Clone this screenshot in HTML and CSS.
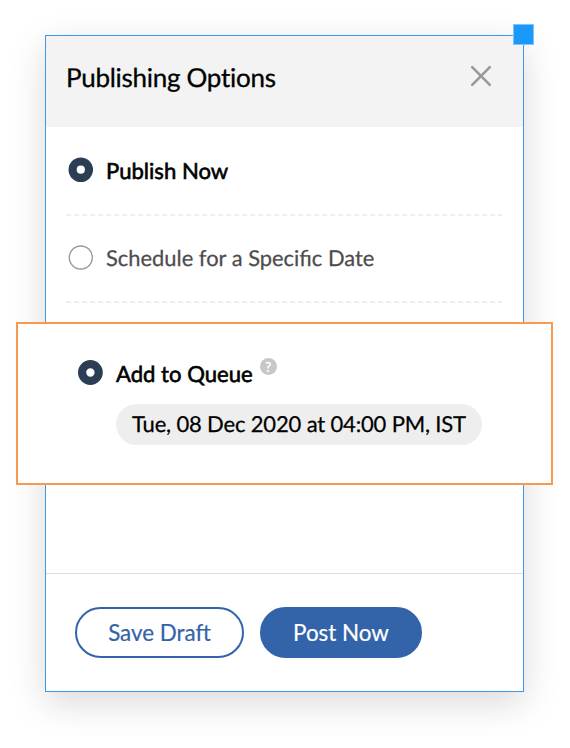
FILE: index.html
```html
<!DOCTYPE html>
<html lang="en">
<head>
<meta charset="utf-8">
<title>Publishing Options</title>
<link rel="stylesheet" href="styles.css">
</head>
<body>
<main class="dialog">
  <span class="handle"></span>
  <header class="header">
    <h1 class="title">Publishing Options</h1>
    <svg class="close" width="22" height="22" viewBox="0 0 22 22"><path d="M2.2 2.2L19.8 19.8M19.8 2.2L2.2 19.8"/></svg>
  </header>
  <section class="options">
    <div class="option">
      <svg class="radio" viewBox="0 0 25 25"><circle class="radio-on" cx="12.8" cy="12.7" r="8.2"/></svg>
      <span class="label label-strong">Publish Now</span>
    </div>
    <div class="option">
      <svg class="radio" viewBox="0 0 25 25"><circle class="radio-off" cx="12.8" cy="12.5" r="11.5"/></svg>
      <span class="label label-muted">Schedule for a Specific Date</span>
    </div>
  </section>
  <section class="queue">
    <div class="queue-head">
      <svg class="radio" viewBox="0 0 25 25"><circle class="radio-on" cx="12.4" cy="12.5" r="8.3"/></svg>
      <span class="label label-strong">Add to Queue</span>
      <span class="help">?</span>
    </div>
    <span class="slot">Tue, 08 Dec 2020 at 04:00 PM, IST</span>
  </section>
  <footer class="footer">
    <button class="button draft">Save Draft</button>
    <button class="button post">Post Now</button>
  </footer>
</main>
</body>
</html>
```
FILE: styles.css
```css
* { box-sizing: border-box; }
html { height: 100%; }
body {
  margin: 0;
  min-height: 748px;
  padding: 35px 0 0 45px;
  background: #fff;
  font-family: Lato, "Liberation Sans", sans-serif;
  font-size: 22px;
  text-rendering: geometricPrecision;
  color: #000;
}
.dialog {
  position: relative;
  display: flex;
  flex-direction: column;
  width: 479px;
  height: 657px;
  border: 1px solid #3d98e8;
  background: #fff;
  box-shadow: 0 11px 34px rgba(0, 0, 0, 0.15);
}
.handle {
  position: absolute;
  top: -12px;
  right: -11px;
  width: 21px;
  height: 21px;
  background: #1b99fb;
  border: 1px solid #7cc4fb;
}
.header {
  display: flex;
  justify-content: space-between;
  height: 91px;
  padding: 25px 31px 0 20px;
  background: #f3f3f3;
}
.title {
  margin: -1px 0 0;
  font-size: 26px;
  line-height: 34px;
  font-weight: 400;
  letter-spacing: -0.28px;
  font-variant-ligatures: none;
  -webkit-text-stroke: 0.3px #000;
}
.close {
  margin-top: 4px;
  fill: none;
  stroke: #999;
  stroke-width: 2.6;
  stroke-linecap: round;
}
.options { padding: 0 21px 0 20px; }
.option {
  display: flex;
  align-items: flex-start;
  height: 87px;
  padding: 29px 0 0 2px;
  background: repeating-linear-gradient(90deg, #eee 0 5px, transparent 5px 8px) left bottom / 100% 2px no-repeat;
}
.option:first-child { height: 89px; padding-top: 30px; }
.radio {
  flex: none;
  width: 25px;
  height: 25px;
  fill: #fff;
}
.radio-on { stroke: #2b3e54; stroke-width: 8.2; }
.radio-off { stroke: #999; stroke-width: 1.4; }
.label {
  margin: -1px 0 0 13px;
  line-height: 30px;
  white-space: nowrap;
}
.label-strong { font-size: 22.1px; -webkit-text-stroke: 0.6px #000; }
.label-muted {
  margin-top: -2px;
  font-size: 21.9px;
  color: #4d4d4d;
  -webkit-text-stroke: 0.25px #4d4d4d;
}
.queue {
  width: 537px;
  height: 163px;
  margin: 19px 0 0 -30px;
  padding: 36px 0 0 60px;
  background: #fff;
  border: 2px solid #f79a4f;
}
.queue-head { display: flex; height: 30px; }
.help {
  width: 17px;
  height: 17px;
  margin: -2px 0 0 7px;
  border-radius: 50%;
  background: #c7c7c7;
  color: #fff;
  font-size: 14px;
  font-weight: 700;
  line-height: 17px;
  text-align: center;
}
.slot {
  display: block;
  width: 366px;
  height: 41px;
  margin: 14px 0 0 38px;
  padding-left: 16px;
  border-radius: 21px;
  background: #eee;
  line-height: 40px;
  letter-spacing: -0.16px;
  white-space: nowrap;
  -webkit-text-stroke: 0.25px #000;
}
.footer {
  display: flex;
  gap: 16px;
  height: 118px;
  margin-top: auto;
  padding: 33px 29px 0;
  border-top: 1px solid #dedede;
}
.button {
  height: 51px;
  padding: 0;
  border: 2px solid #3363a9;
  border-radius: 26px;
  font: inherit;
  font-size: 22.4px;
  -webkit-text-stroke: 0.2px currentColor;
}
.draft { width: 169px; background: #fff; color: #3363a9; }
.post { width: 162px; background: #3363a9; color: #fff; }
```
